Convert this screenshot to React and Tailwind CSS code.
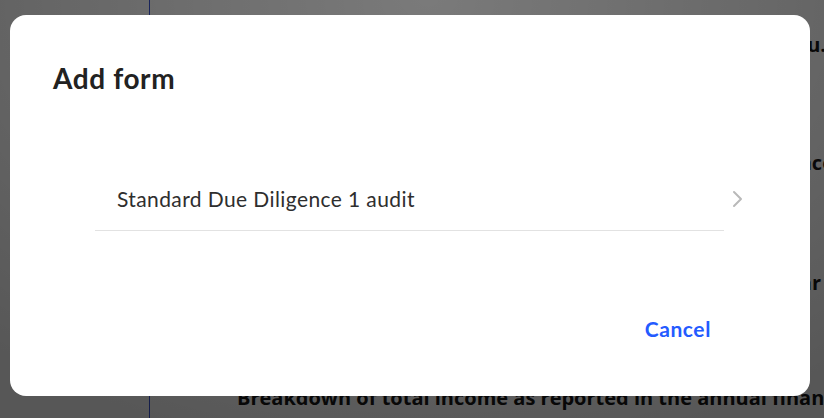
import React from "react";

export default function App() {
  return (
    <div className="relative h-[418px] w-[824px] overflow-hidden bg-white">
      {/* background page */}
      <div className="flex h-full font-['Open_Sans',sans-serif]">
        <div className="w-[150px] shrink-0 border-r border-[#3a55d8]" />
        <div className="flex flex-col pl-[87px] text-[20px] font-bold text-[#151515] whitespace-nowrap">
          <div className="mt-[31px] w-[589px] text-right leading-[28px]">Tell us more about the organisation and about you.</div>
          <div className="mt-[90px] w-[629px] text-right leading-[28px]">Describe the main sources of your annual income</div>
          <div className="mt-[92px] w-[584px] text-right leading-[28px]">Provide the details of the last financial year</div>
          <div className="mt-[87px] leading-[28px]">Breakdown of total income as reported in the annual financial statements</div>
        </div>
      </div>

      {/* overlay */}
      <div className="absolute inset-0 bg-[radial-gradient(ellipse_80%_110%_at_52%_0%,rgba(0,0,0,0.52),rgba(0,0,0,0.66))]" />

      {/* modal */}
      <div className="absolute left-[10px] top-[15px] flex h-[381px] w-[800px] flex-col rounded-2xl bg-white font-['Lato',sans-serif]">
        <h2 className="pl-[43px] pt-[45px] text-[28px] font-bold leading-[36px] tracking-[0.6px] text-[#222222]">
          Add form
        </h2>
        <ul className="mt-[71px] pl-[85px]">
          <li className="flex items-center">
            <div className="flex h-[64px] w-[629px] items-center border-b border-[#e2e2e2] pl-[22px] text-[21px] tracking-[0.4px] text-[#2e2e2e]">
              Standard Due Diligence 1 audit
            </div>
            <svg width="12" height="18" viewBox="0 0 12 18" className="ml-[7px] -mt-[1px]" fill="none">
              <path d="M3 2 L10 9 L3 16" stroke="#b9b9b9" strokeWidth="2" strokeLinecap="round" strokeLinejoin="round" />
            </svg>
          </li>
        </ul>
        <div className="mt-auto flex justify-end pb-[47px] pr-[83px]">
          <button className="h-[40px] px-[16px] text-[21px] font-bold tracking-[0.6px] text-[#245bff]">Cancel</button>
        </div>
      </div>
    </div>
  );
}
